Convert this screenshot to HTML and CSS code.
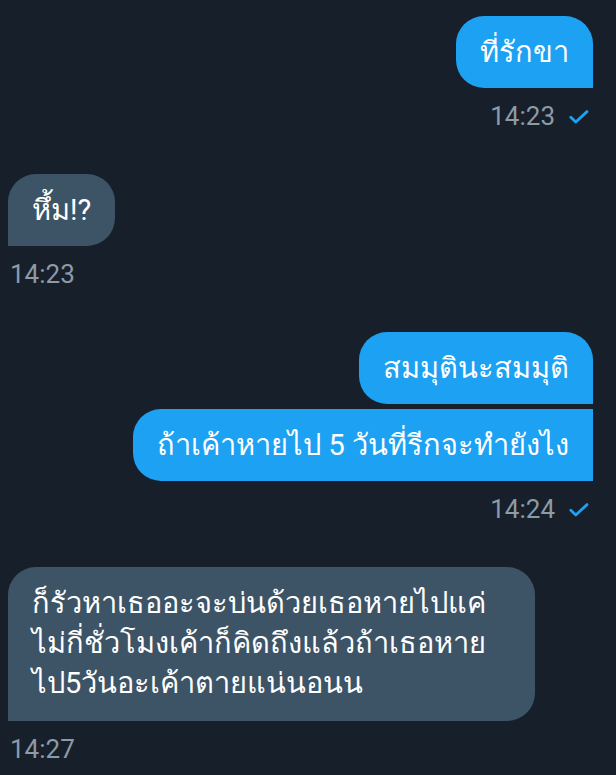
FILE: index.html
```html
<!DOCTYPE html>
<html lang="th">
<head>
  <meta charset="UTF-8">
  <meta name="viewport" content="width=device-width, initial-scale=1.0">
  <title>ข้อความ</title>
  <link rel="stylesheet" href="styles.css">
</head>
<body>
  <main class="chat">
    <div class="group sent">
      <div class="bubble single">ที่รักขา</div>
      <div class="meta">
        <span class="time">14:23</span>
        <svg class="check" width="20" height="14" viewBox="0 0 20 14"><path d="M1.8 7.2 L6.8 12 L18 1.6" fill="none" stroke="#1da1f2" stroke-width="2.8" stroke-linecap="round" stroke-linejoin="round"/></svg>
      </div>
    </div>

    <div class="group received">
      <div class="bubble single">หึ้ม!?</div>
      <div class="meta"><span class="time">14:23</span></div>
    </div>

    <div class="group sent">
      <div class="bubble first">สมมุตินะสมมุติ</div>
      <div class="bubble last">ถ้าเค้าหายไป 5 วันที่รีกจะทำยังไง</div>
      <div class="meta">
        <span class="time">14:24</span>
        <svg class="check" width="20" height="14" viewBox="0 0 20 14"><path d="M1.8 7.2 L6.8 12 L18 1.6" fill="none" stroke="#1da1f2" stroke-width="2.8" stroke-linecap="round" stroke-linejoin="round"/></svg>
      </div>
    </div>

    <div class="group received">
      <div class="bubble single wide">ก็รัวหาเธออะจะบ่นด้วยเธอหายไปแค่<br>ไม่กี่ชั่วโมงเค้าก็คิดถึงแล้วถ้าเธอหาย<br>ไป5วันอะเค้าตายแน่นอนน</div>
      <div class="meta"><span class="time">14:27</span></div>
    </div>
  </main>
</body>
</html>
```

FILE: styles.css
```css
body {
  margin: 0;
  padding: 0;
  background: #17202a;
  font-family: Roboto, "Noto Sans", sans-serif;
  color: white;
  overflow: hidden;
}
.chat {
  padding: 16px 23px 0 8px;
  display: flex;
  flex-direction: column;
  gap: 42px;
}
.group {
  display: flex;
  flex-direction: column;
  gap: 5px;
}
.sent {
  align-items: flex-end;
}
.received {
  align-items: flex-start;
}
.bubble {
  font-size: 29px;
  line-height: 40px;
  padding: 16px 24px;
  border-radius: 28px;
  white-space: nowrap;
}
.sent .bubble {
  background: #1da1f2;
}
.received .bubble {
  background: #3d5466;
}
.sent .single {
  border-bottom-right-radius: 0;
}
.received .single {
  border-bottom-left-radius: 0;
}
.sent .first {
  border-bottom-right-radius: 0;
}
.sent .last {
  border-top-right-radius: 0;
  border-bottom-right-radius: 0;
}
.wide {
  width: 479px;
  padding-bottom: 18px;
}
.meta {
  margin-top: 7px;
  display: flex;
  align-items: center;
  gap: 14px;
  height: 32px;
}
.sent .meta {
  padding-right: 4px;
}
.received .meta {
  padding-left: 2px;
}
.time {
  font-size: 26px;
  color: #8d9aa7;
}
.check {
  display: block;
  margin-top: 2px;
}
```
